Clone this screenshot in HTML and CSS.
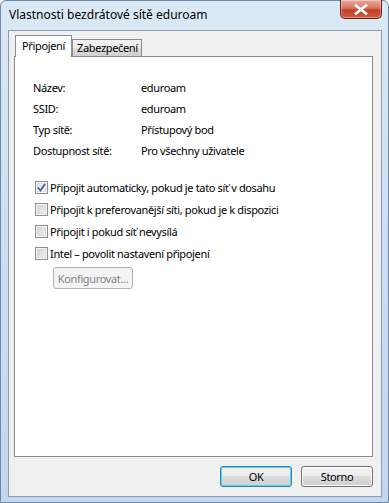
FILE: index.html
```html
<!DOCTYPE html>
<html lang="cs">
<head>
<meta charset="utf-8">
<title>Vlastnosti bezdrátové sítě eduroam</title>
<link rel="stylesheet" href="styles.css">
</head>
<body>
<div class="window">
  <div class="titlebar">
    <span class="title">Vlastnosti bezdrátové sítě eduroam</span>
    <button class="close" aria-label="Zavřít">
      <svg width="14" height="11" viewBox="0 0 14 11"><path d="M2 1.5 L12 9.5 M12 1.5 L2 9.5" stroke="#fff" stroke-width="2.6" stroke-linecap="square" fill="none"/></svg>
    </button>
  </div>
  <div class="client">
    <div class="tabs">
      <div class="tab active">Připojení</div>
      <div class="tab">Zabezpečení</div>
    </div>
    <div class="panel">
      <div class="info">
        <div class="label">Název:</div><div class="value">eduroam</div>
        <div class="label">SSID:</div><div class="value">eduroam</div>
        <div class="label">Typ sítě:</div><div class="value">Přístupový bod</div>
        <div class="label">Dostupnost sítě:</div><div class="value">Pro všechny uživatele</div>
      </div>
      <div class="checks">
        <label class="check"><span class="box checked"><svg width="9" height="9" viewBox="0 0 9 9"><path d="M1 4.5 L3.5 7.5 L8 1" stroke="#4a5f97" stroke-width="1.8" fill="none"/></svg></span>Připojit automaticky, pokud je tato síť v dosahu</label>
        <label class="check"><span class="box"></span>Připojit k preferovanější síti, pokud je k dispozici</label>
        <label class="check"><span class="box"></span>Připojit i pokud síť nevysílá</label>
        <label class="check"><span class="box"></span>Intel – povolit nastavení připojení</label>
      </div>
      <button class="btn disabled">Konfigurovat...</button>
    </div>
    <div class="footer">
      <button class="btn default">OK</button>
      <button class="btn">Storno</button>
    </div>
  </div>
</div>
</body>
</html>
```

FILE: styles.css
```css
* { box-sizing: border-box; }
html, body { margin: 0; padding: 0; }
body {
  width: 389px;
  height: 503px;
  overflow: hidden;
  font-family: "Noto Sans", "Open Sans", sans-serif;
  font-size: 11px;
  letter-spacing: -0.35px;
  color: #000;
}
.window {
  width: 389px;
  height: 503px;
  display: flex;
  flex-direction: column;
  border: 1px solid #6f8aa6;
  border-radius: 6px 6px 0 0;
  background: linear-gradient(180deg, #dbe8f5 0%, #cfe0f2 40%, #c2d7ee 100%);
  padding: 0 6px 5px 7px;
}
.titlebar {
  height: 29px;
  display: flex;
  align-items: flex-start;
  padding-left: 1px;
}
.title {
  margin-top: 5px;
  font-size: 12px;
  letter-spacing: 0;
}
.close {
  margin-left: auto;
  margin-right: 0;
  width: 42px;
  height: 19px;
  margin-top: -1px;
  border: 1px solid #6b1e18;
  border-top: none;
  border-radius: 0 0 5px 5px;
  background: linear-gradient(180deg, #e9a99c 0%, #d5765f 45%, #c0402a 55%, #d25a3c 100%);
  box-shadow: inset 0 0 0 1px rgba(255,255,255,0.35);
  display: flex;
  align-items: center;
  justify-content: center;
  padding: 0;
}
.client {
  flex: 1;
  display: flex;
  flex-direction: column;
  background: #f0f0f0;
  border: 1px solid #8b9bb0;
  padding: 4px 8px 0 5px;
}
.tabs {
  display: flex;
  align-items: flex-end;
  height: 21px;
  padding-left: 1px;
  position: relative;
  z-index: 1;
}
.tab {
  height: 17px;
  padding: 0 3px 0 4px;
  border: 1px solid #898c95;
  border-bottom: none;
  background: linear-gradient(180deg, #f2f2f2 0%, #ebebeb 50%, #dddddd 51%, #cfcfcf 100%);
  line-height: 16px;
  margin-left: -1px;
}
.tab.active {
  height: 22px;
  margin-bottom: -1px;
  background: #fff;
  padding: 0 6px 0 6px;
  line-height: 20px;
  margin-left: 0;
  margin-right: 1px;
  position: relative;
  z-index: 2;
}
.panel {
  flex: 0 0 401px;
  background: #fff;
  border: 1px solid #898c95;
  padding: 22px 18px 0 18px;
}
.info {
  display: grid;
  grid-template-columns: 108px 1fr;
  row-gap: 4px;
  line-height: 17px;
}
.checks {
  margin-top: 20px;
  display: flex;
  flex-direction: column;
  gap: 5px;
  padding-left: 2px;
}
.check {
  display: flex;
  align-items: center;
  height: 17px;
  gap: 2px;
}
.box {
  width: 13px;
  height: 13px;
  border: 1px solid #8e8f8f;
  background: linear-gradient(135deg, #cbcfd5 0%, #f6f6f6 100%);
  box-shadow: inset 0 0 0 1px #f4f4f4, inset 0 0 0 2px #d9dce1;
  display: flex;
  align-items: center;
  justify-content: center;
  flex: none;
}
.box.checked {
  background: linear-gradient(135deg, #dfe3ea 0%, #fafafa 100%);
}
.btn {
  font-family: inherit;
  font-size: 11px;
  letter-spacing: -0.35px;
  height: 22px;
  border: 1px solid #707070;
  border-radius: 3px;
  background: linear-gradient(180deg, #f2f2f2 0%, #ebebeb 49%, #dddddd 50%, #cfcfcf 100%);
  box-shadow: inset 0 0 0 1px #fcfcfc;
  padding: 0;
  color: #000;
}
.btn.disabled {
  margin-top: 5px;
  margin-left: 20px;
  width: 80px;
  background: #f4f4f4;
  border-color: #adb2b5;
  color: #838383;
  box-shadow: none;
}
.footer {
  display: flex;
  justify-content: flex-end;
  gap: 9px;
  padding-top: 9px;
  padding-right: 0;
}
.footer .btn {
  width: 72px;
  height: 21px;
}
.btn.default {
  border-color: #3c7fb1;
  box-shadow: inset 0 0 0 1px #48d8fb;
}
```
